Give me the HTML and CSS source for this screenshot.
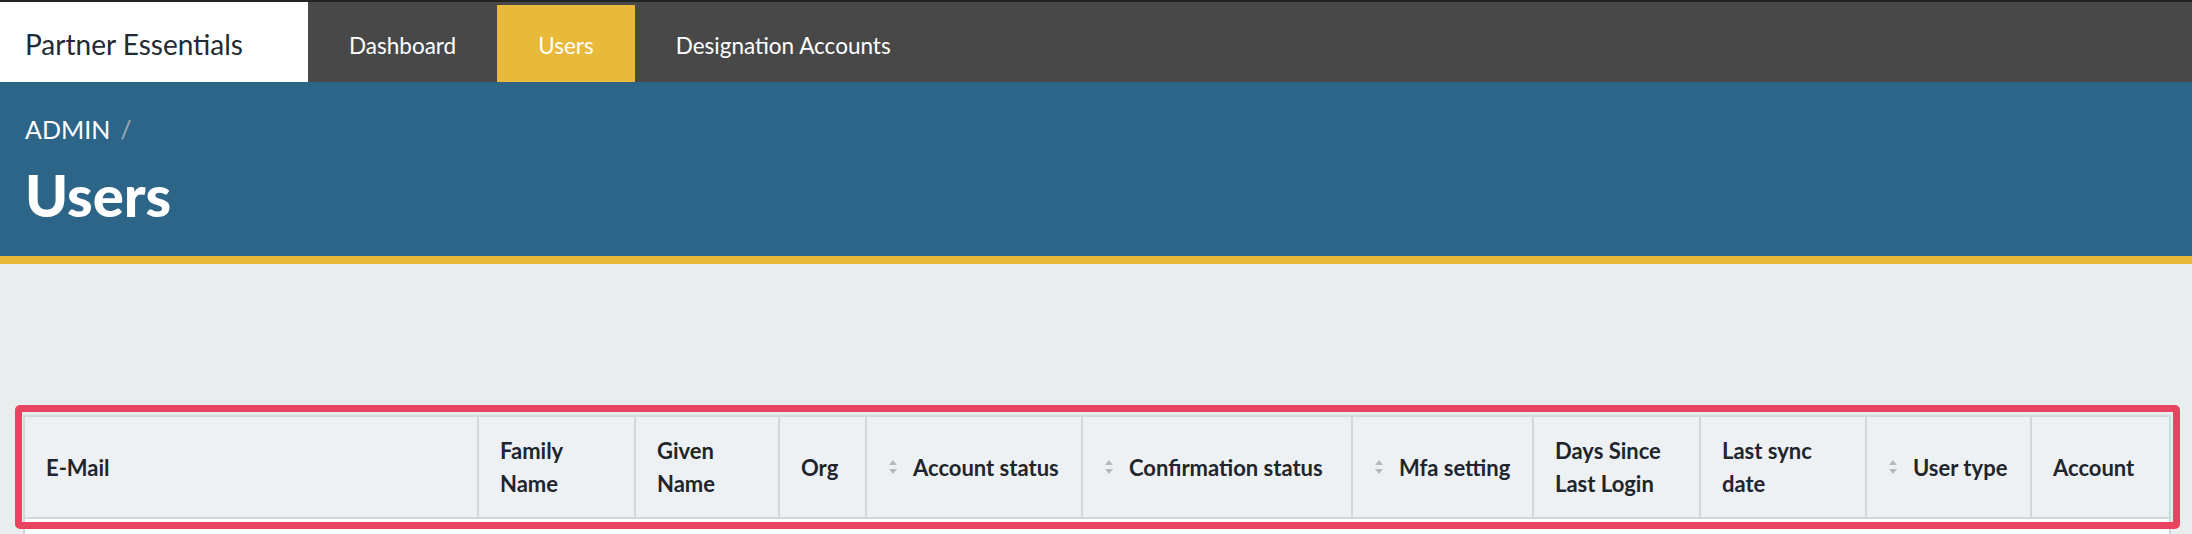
FILE: index.html
```html
<!DOCTYPE html>
<html lang="en">
<head>
  <meta charset="UTF-8">
  <meta name="viewport" content="width=device-width, initial-scale=1.0">
  <title>Users - Partner Essentials</title>
  <link rel="stylesheet" href="styles.css">
</head>
<body>
  <header class="topbar">
    <div class="brand">Partner Essentials</div>
    <nav class="nav">
      <a class="nav-link" href="#">Dashboard</a>
      <a class="nav-link active" href="#">Users</a>
      <a class="nav-link" href="#">Designation Accounts</a>
    </nav>
  </header>

  <section class="page-header">
    <ol class="breadcrumb">
      <li>ADMIN</li>
    </ol>
    <h1>Users</h1>
  </section>

  <main class="content">
    <div class="table-wrap">
      <table class="users-table">
        <colgroup>
          <col class="col-email">
          <col class="col-family">
          <col class="col-given">
          <col class="col-org">
          <col class="col-status">
          <col class="col-confirm">
          <col class="col-mfa">
          <col class="col-days">
          <col class="col-sync">
          <col class="col-type">
          <col class="col-account">
        </colgroup>
        <thead>
          <tr>
            <th>E-Mail</th>
            <th>Family Name</th>
            <th>Given Name</th>
            <th>Org</th>
            <th><span class="sort"><svg width="10" height="16" viewBox="0 0 10 16"><path d="M5 1 L9 6 H1 Z M5 15 L9 10 H1 Z" fill="#b4b9be"/></svg>Account status</span></th>
            <th><span class="sort"><svg width="10" height="16" viewBox="0 0 10 16"><path d="M5 1 L9 6 H1 Z M5 15 L9 10 H1 Z" fill="#b4b9be"/></svg>Confirmation status</span></th>
            <th><span class="sort"><svg width="10" height="16" viewBox="0 0 10 16"><path d="M5 1 L9 6 H1 Z M5 15 L9 10 H1 Z" fill="#b4b9be"/></svg>Mfa setting</span></th>
            <th>Days Since Last Login</th>
            <th>Last sync date</th>
            <th><span class="sort"><svg width="10" height="16" viewBox="0 0 10 16"><path d="M5 1 L9 6 H1 Z M5 15 L9 10 H1 Z" fill="#b4b9be"/></svg>User type</span></th>
            <th>Account</th>
          </tr>
        </thead>
        <tbody>
          <tr><td colspan="11"></td></tr>
        </tbody>
      </table>
      <!-- highlight box drawn over the header row -->
      <div class="highlight"></div>
    </div>
  </main>
</body>
</html>
```

FILE: styles.css
```css
body {
  margin: 0;
  padding: 0;
  font-family: Lato, "Open Sans", sans-serif;
  background-color: #e9edee;
  color: #1f252d;
}

.topbar {
  display: flex;
  height: 80px;
  border-top: 2px solid #222;
  background-color: #484848;
}

.brand {
  width: 283px;
  padding-left: 25px;
  padding-top: 3px;
  background-color: white;
  color: #222a33;
  font-size: 28px;
  display: flex;
  align-items: center;
}

.nav {
  display: flex;
  align-items: flex-end;
}

.nav-link {
  display: flex;
  align-items: center;
  height: 73px;
  padding: 4px 41px 0;
  color: white;
  font-size: 22.5px;
  text-decoration: none;
}

.nav-link.active {
  background-color: #e8b93a;
}

.page-header {
  background-color: #2d6589;
  border-bottom: 8px solid #e8b93a;
  padding: 26px 25px 27px;
  color: white;
}

.breadcrumb {
  list-style: none;
  margin: 0 0 11px;
  padding: 0;
  font-size: 25px;
  line-height: 42px;
}

.breadcrumb li::after {
  content: "/";
  color: #9aa7b2;
  padding: 0 10px;
}

.page-header h1 {
  margin: 0;
  font-size: 58px;
  font-weight: 900;
  line-height: 68px;
}

.content {
  padding: 151px 23px 0;
}

.table-wrap {
  position: relative;
}

.users-table {
  width: 100%;
  table-layout: fixed;
  border-collapse: collapse;
  border: 2px solid #d2d7db;
}

.col-email { width: 454px; }
.col-family { width: 157px; }
.col-given { width: 144px; }
.col-org { width: 87px; }
.col-status { width: 216px; }
.col-confirm { width: 270px; }
.col-mfa { width: 181px; }
.col-days { width: 167px; }
.col-sync { width: 166px; }
.col-type { width: 165px; }
.col-account { width: 139px; }

.users-table th {
  height: 66px;
  padding: 17px 21px;
  background-color: #eef1f4;
  border: 2px solid #d2d7db;
  text-align: left;
  vertical-align: middle;
  font-size: 22px;
  font-weight: 700;
  line-height: 33px;
}

.users-table td {
  height: 60px;
  background-color: white;
}

.sort {
  display: inline-flex;
  align-items: center;
  gap: 15px;
  white-space: nowrap;
}

.highlight {
  position: absolute;
  top: -10px;
  left: -8px;
  right: -11px;
  height: 110px;
  border: 7px solid #e8445f;
  border-radius: 5px;
}
```
